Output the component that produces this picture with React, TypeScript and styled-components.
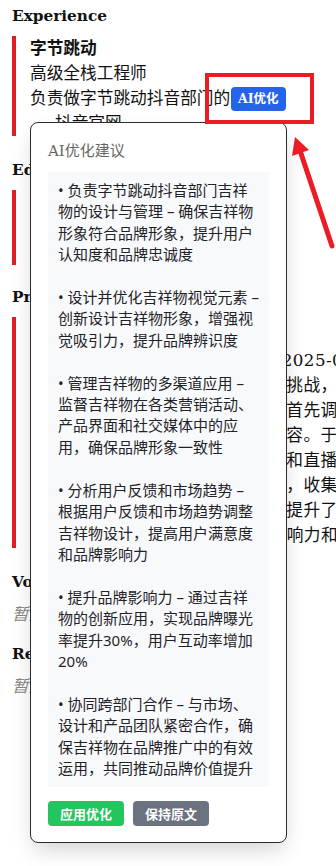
import * as React from "react";
import styled, { createGlobalStyle } from "styled-components";

const GlobalStyle = createGlobalStyle`
  html, body {
    margin: 0;
    padding: 0;
    background: #fff;
  }
`;

const Page = styled.div`
  position: relative;
  min-height: 866px;
  box-sizing: border-box;
  overflow: hidden;
  padding: 5px 0 40px 12px;
  font-family: "DejaVu Serif", "Noto Sans CJK SC", serif;
  font-size: 16.7px;
  line-height: 25px;
  color: #111;
`;

const Section = styled.section<{ $gap?: number }>`
  margin-bottom: ${(p) => p.$gap ?? 23}px;
`;

const Heading = styled.h2`
  margin: 0 0 9px;
  font-size: 15.3px;
  line-height: 22px;
  font-weight: bold;
`;

const Entry = styled.div<{ $top?: number }>`
  border-left: 4px solid #e01e26;
  padding: ${(p) => p.$top ?? 0}px 0 0 14px;
`;

const EntryTitle = styled.div`
  font-weight: bold;
`;

const Line = styled.div`
  position: relative;
  white-space: nowrap;
`;

const Bullets = styled.ul`
  margin: 0;
  padding-left: 25px;
  li::marker {
    color: #e01e26;
  }
`;

const Desc = styled.div`
  white-space: pre;
  overflow: hidden;
  letter-spacing: 0.4px;
`;

const Empty = styled.div`
  margin-top: 7px;
  color: #888;
  font-style: italic;
`;

const AiButton = styled.button`
  position: absolute;
  left: 201px;
  top: 1px;
  height: 24px;
  padding: 0 7px;
  border: none;
  border-radius: 4px;
  background: #2563eb;
  color: #fff;
  font-family: inherit;
  font-size: 12.5px;
  font-weight: bold;
  line-height: 24px;
`;

const Popup = styled.div`
  position: absolute;
  left: 30px;
  top: 122px;
  width: 257px;
  box-sizing: border-box;
  padding: 18px 17px 16px;
  background: #fff;
  border: 1px solid #2b2b2b;
  border-radius: 8px;
  box-shadow: 0 10px 22px -4px rgba(0, 0, 0, 0.18);
  z-index: 5;
`;

const PopupTitle = styled.div`
  margin-bottom: 10px;
  font-size: 15px;
  line-height: 21px;
  color: #666;
`;

const Suggestion = styled.div`
  padding: 8px 10px;
  background: #f8f9fb;
  font-family: "Noto Sans", "Noto Sans CJK SC", sans-serif;
  font-size: 15px;
  line-height: 21.4px;
  color: #1f2328;
  white-space: pre-wrap;
`;

const Actions = styled.div`
  display: flex;
  gap: 9px;
  margin-top: 14px;
`;

const ActionButton = styled.button<{ $tone: "green" | "gray" }>`
  height: 25px;
  padding: 0 12px;
  border: none;
  border-radius: 4px;
  background: ${(p) => (p.$tone === "green" ? "#22c55e" : "#6b7280")};
  color: #fff;
  font-family: "Noto Sans CJK SC", sans-serif;
  font-size: 13px;
  font-weight: bold;
  line-height: 25px;
`;

const Annotation = styled.svg`
  position: absolute;
  left: 0;
  top: 0;
  width: 336px;
  height: 260px;
  pointer-events: none;
  z-index: 10;
`;

const suggestion = [
  "• 负责字节跳动抖音部门吉祥物的设计与管理 – 确保吉祥物形象符合品牌形象，提升用户认知度和品牌忠诚度",
  "• 设计并优化吉祥物视觉元素 – 创新设计吉祥物形象，增强视觉吸引力，提升品牌辨识度",
  "• 管理吉祥物的多渠道应用 – 监督吉祥物在各类营销活动、产品界面和社交媒体中的应用，确保品牌形象一致性",
  "• 分析用户反馈和市场趋势 – 根据用户反馈和市场趋势调整吉祥物设计，提高用户满意度和品牌影响力",
  "• 提升品牌影响力 – 通过吉祥物的创新应用，实现品牌曝光率提升30%，用户互动率增加20%",
  "• 协同跨部门合作 – 与市场、设计和产品团队紧密合作，确保吉祥物在品牌推广中的有效运用，共同推动品牌价值提升",
].join("\n\n");

const projectLines = [
  "抖音吉祥物品牌形象焕新周期为 (2025-03 至 2025-06)",
  "项目初期品牌形象老化面临诸多新挑战，用户认知度较低。",
  "用户认知度偏低且传播渠道分散。首先调研目标用户喜好，",
  "重新设计吉祥物造型与表情包等内容。于是将其推广到",
  "将吉祥物融入开屏、贴纸、挑战赛和直播间互动玩法中",
  "上线后持续追踪用户互动数据反馈，收集意见并迭代优化。",
  "最终吉祥物相关内容的播放量大幅提升了40%，",
  "显著增强了抖音App在用户中的影响力和品牌好感度。",
].join("\n");

export default function App() {
  return (
    <Page>
      <GlobalStyle />
      <Section>
        <Heading>Experience</Heading>
        <Entry>
          <EntryTitle>字节跳动</EntryTitle>
          <Line>高级全栈工程师</Line>
          <Line>
            负责做字节跳动抖音部门的
            <AiButton>AI优化</AiButton>
          </Line>
          <Bullets>
            <li>抖音官网</li>
          </Bullets>
        </Entry>
      </Section>

      <Section $gap={21}>
        <Heading>Education</Heading>
        <Entry>
          <EntryTitle>北京大学</EntryTitle>
          <Line>计算机科学与技术 本科</Line>
          <Line>2015.09 - 2019.06</Line>
        </Entry>
      </Section>

      <Section>
        <Heading>Projects</Heading>
        <Entry $top={6}>
          <EntryTitle>抖音吉祥物升级</EntryTitle>
          <Desc>{projectLines}</Desc>
        </Entry>
      </Section>

      <Section $gap={16}>
        <Heading>Volunteering</Heading>
        <Empty>暂无志愿经历</Empty>
      </Section>

      <Section>
        <Heading>References</Heading>
        <Empty>暂无推荐人</Empty>
      </Section>

      <Popup>
        <PopupTitle>AI优化建议</PopupTitle>
        <Suggestion>{suggestion}</Suggestion>
        <Actions>
          <ActionButton $tone="green">应用优化</ActionButton>
          <ActionButton $tone="gray">保持原文</ActionButton>
        </Actions>
      </Popup>

      <Annotation viewBox="0 0 336 260">
        <rect x="207" y="75" width="105" height="47" fill="none" stroke="#ec1c24" strokeWidth="4" />
        <line x1="332" y1="246" x2="300.5" y2="152" stroke="#ec1c24" strokeWidth="5" strokeLinecap="round" />
        <polygon points="295,137 309,150 292,156" fill="#ec1c24" />
      </Annotation>
    </Page>
  );
}
